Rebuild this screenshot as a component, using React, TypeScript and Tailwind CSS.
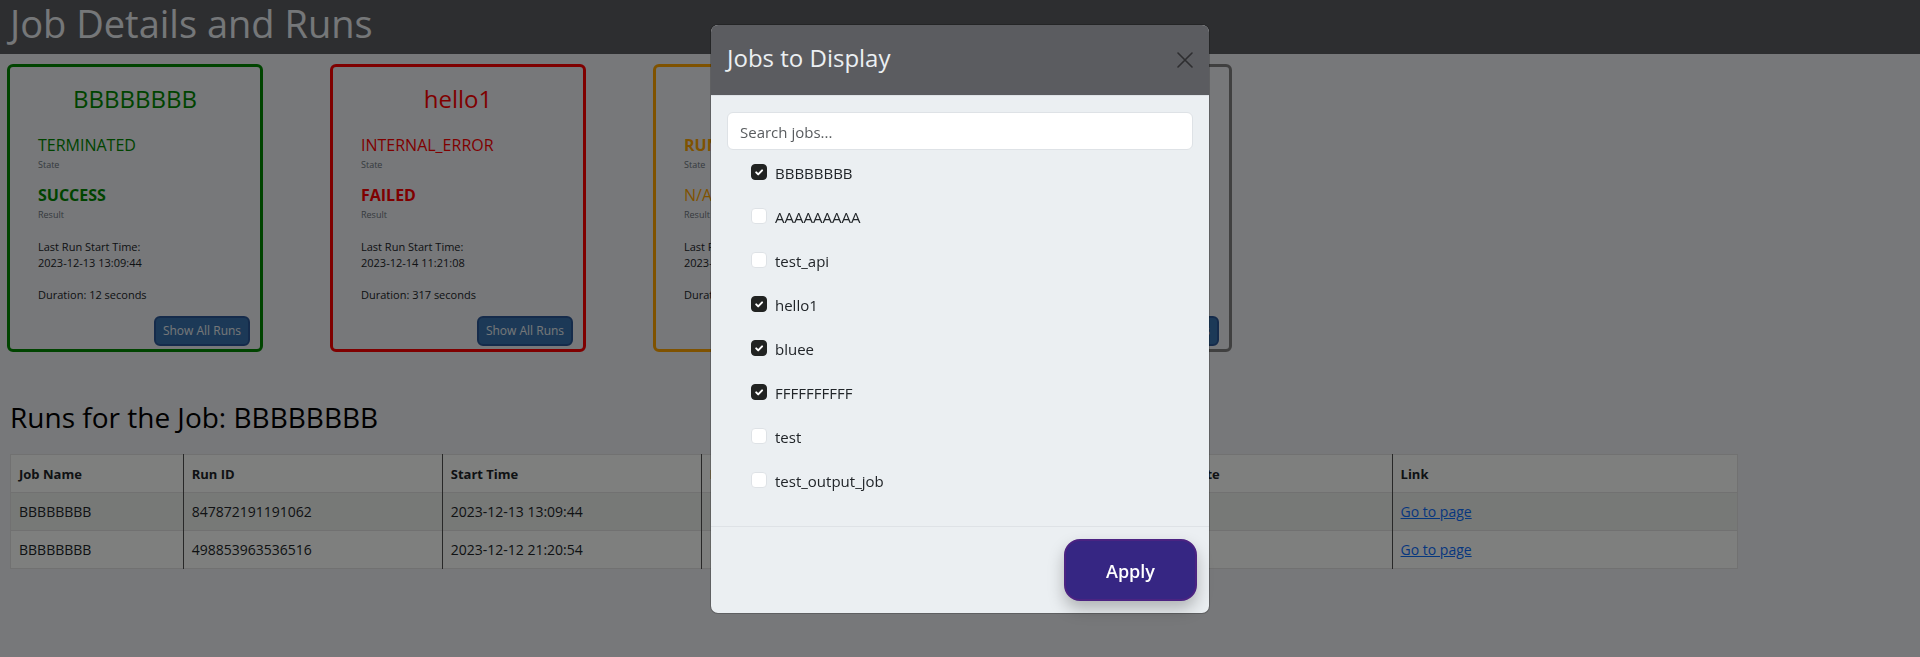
import { useState } from "react";

type Tone = "green" | "red" | "orange" | "gray";

const tones: Record<Tone, { border: string; text: string }> = {
  green: { border: "border-[#008800]", text: "text-[#008800]" },
  red: { border: "border-[#ff0000]", text: "text-[#ff0000]" },
  orange: { border: "border-[#ffa500]", text: "text-[#ffa500]" },
  gray: { border: "border-[#808080]", text: "text-[#808080]" },
};

type Job = {
  name: string;
  state: string;
  result: string;
  start: string;
  duration: string;
  tone: Tone;
  running?: boolean;
};

const jobs: Job[] = [
  { name: "BBBBBBBB", state: "TERMINATED", result: "SUCCESS", start: "2023-12-13 13:09:44", duration: "12 seconds", tone: "green" },
  { name: "hello1", state: "INTERNAL_ERROR", result: "FAILED", start: "2023-12-14 11:21:08", duration: "317 seconds", tone: "red" },
  { name: "bluee", state: "RUNNING", result: "N/A", start: "2023-12-14 11:30:12", duration: "N/A", tone: "orange", running: true },
  { name: "FFFFFFFFFF", state: "N/A", result: "N/A", start: "N/A", duration: "N/A", tone: "gray" },
];

const runs = [
  { id: "847872191191062", start: "2023-12-13 13:09:44", duration: "12 seconds" },
  { id: "498853963536516", start: "2023-12-12 21:20:54", duration: "14 seconds" },
];

const options = [
  { name: "BBBBBBBB", on: true },
  { name: "AAAAAAAAA", on: false },
  { name: "test_api", on: false },
  { name: "hello1", on: true },
  { name: "bluee", on: true },
  { name: "FFFFFFFFFF", on: true },
  { name: "test", on: false },
  { name: "test_output_job", on: false },
];

const columns = [
  { label: "Job Name", width: "w-[10%]" },
  { label: "Run ID", width: "w-[15%]" },
  { label: "Start Time", width: "w-[15%]" },
  { label: "Duration", width: "w-[15%]" },
  { label: "State", width: "w-[10%]" },
  { label: "Result State", width: "w-[15%]" },
  { label: "Link", width: "w-[20%]" },
];

function JobCard({ job }: { job: Job }) {
  const tone = tones[job.tone];
  return (
    <article className={`flex h-72 w-64 shrink-0 flex-col rounded-md border-3 ${tone.border}`}>
      <h2 className={`mt-3 text-center text-2xl leading-10 ${tone.text}`}>{job.name}</h2>
      <div className="mt-3.5 flex-1 px-7">
        <p className={`text-base leading-6 ${tone.text} ${job.running ? "font-bold" : ""}`}>{job.state}</p>
        <p className="text-[9px] leading-4 text-[#6c757d]">State</p>
        <p className={`mt-2.5 text-base leading-6 ${tone.text} ${job.running ? "" : "font-bold"}`}>{job.result}</p>
        <p className="text-[9px] leading-4 text-[#6c757d]">Result</p>
        <p className="mt-4 text-[11px] leading-4 text-[#212529]">Last Run Start Time:</p>
        <p className="text-[11px] leading-4 text-[#212529]">{job.start}</p>
        <p className="mt-4 text-[11px] leading-4 text-[#212529]">Duration: {job.duration}</p>
      </div>
      <button type="button" className="mr-2.5 mb-[3px] h-[30px] w-24 self-end rounded-md border-2 border-[#2b5797] bg-[#3873ae] text-xs text-[#ebeff2]">
        Show All Runs
      </button>
    </article>
  );
}

function RunsTable() {
  return (
    <table className="ml-2.5 w-[90%] table-fixed border-collapse border border-[#e2e3e3] bg-[#fcfffc] text-left leading-[21px] text-[#212529]">
      <thead>
        <tr className="border-y border-[#e2e3e3] text-[13px]">
          {columns.map((c) => (
            <th key={c.label} className={`border-r border-r-[#505050] px-2 pt-[9px] pb-[7px] font-bold last:border-r-[#e2e3e3] ${c.width}`}>{c.label}</th>
          ))}
        </tr>
      </thead>
      <tbody>
        {runs.map((r) => (
          <tr key={r.id} className="border-y border-[#e2e3e3] text-sm leading-[21px] odd:bg-[#eff2ef]">
            {["BBBBBBBB", r.id, r.start, r.duration, "TERMINATED", "SUCCESS"].map((v) => (
              <td key={v} className="border-r border-r-[#505050] p-2">{v}</td>
            ))}
            <td className="p-2"><a href="#run" className="text-[#0d6efd] underline">Go to page</a></td>
          </tr>
        ))}
      </tbody>
    </table>
  );
}

function JobsDialog() {
  const [checked, setChecked] = useState(options.map((o) => o.on));
  return (
    <section role="dialog" aria-modal="true" aria-labelledby="dialog-title" className="w-[500px] rounded-lg border border-black/20 bg-[#ebeff2] bg-clip-padding">
      <header className="flex h-[71px] items-center justify-between rounded-t-[7px] border-b border-[#dee2e6] bg-[#5b5c60] px-4">
        <h2 id="dialog-title" className="pb-1 text-2xl leading-8 text-[#ebeff2]">Jobs to Display</h2>
        <button type="button" aria-label="Close" className="text-[#2e2e30]">
          <svg viewBox="0 0 16 16" className="size-4" stroke="currentColor" strokeWidth="1.6" strokeLinecap="round">
            <path d="M1 1l14 14M15 1L1 15" />
          </svg>
        </button>
      </header>
      <div className="px-4 pt-4 pb-3.5">
        <input type="text" aria-label="Search jobs" placeholder="Search jobs..." className="h-[38px] w-full rounded-md border border-[#dee2e6] bg-white px-3 pt-0.5 text-[15px] text-[#212529] placeholder:text-[#595c5f]" />
        <ul className="pt-2.5 pl-6">
          {options.map((o, i) => (
            <li key={o.name} className="mb-5 h-6">
              <label className="flex items-start gap-2 text-[15px] leading-6 text-[#212529]">
                <span className="relative mt-1 flex size-4">
                  <input
                    type="checkbox"
                    checked={checked[i]}
                    onChange={() => setChecked(checked.map((c, j) => (j === i ? !c : c)))}
                    className="size-4 appearance-none rounded-[4px] border border-[#dee2e6] bg-white checked:border-[#212322] checked:bg-[#212322]"
                  />
                  {checked[i] && (
                    <svg viewBox="0 0 16 16" className="pointer-events-none absolute inset-0 size-4" fill="none" stroke="#fff" strokeWidth="2" strokeLinecap="round" strokeLinejoin="round">
                      <path d="M5.2 8.4l2 2 3.9-4" />
                    </svg>
                  )}
                </span>
                <span className="pt-px">{o.name}</span>
              </label>
            </li>
          ))}
        </ul>
      </div>
      <footer className="flex justify-end border-t border-[#dee2e6] p-3">
        <button type="button" className="h-[62px] w-[133px] rounded-2xl border-2 border-[#4b2382] bg-[#362683] pt-0.5 text-lg font-semibold text-white shadow-[0_8px_16px_rgba(0,0,0,0.25)]">
          Apply
        </button>
      </footer>
    </section>
  );
}

export default function App() {
  return (
    <div className="min-h-screen bg-[#eef0f4] font-['Open_Sans','Noto_Sans',sans-serif]">
      <header className="flex h-[54px] items-start bg-[#5b5c60] px-2.5">
        <h1 className="text-[38px] leading-[46px] text-[#ebeff2]">Job Details and Runs</h1>
      </header>
      <main>
        <div className="flex gap-[67px] px-[7px] pt-2.5">
          {jobs.map((j) => (
            <JobCard key={j.name} job={j} />
          ))}
        </div>
        <h2 className="px-2.5 pt-[46px] pb-[18px] text-[28px] leading-[38px] text-black">Runs for the Job: BBBBBBBB</h2>
        <RunsTable />
      </main>
      <div className="fixed inset-0 flex items-start justify-center bg-black/50 pt-6">
        <JobsDialog />
      </div>
    </div>
  );
}
